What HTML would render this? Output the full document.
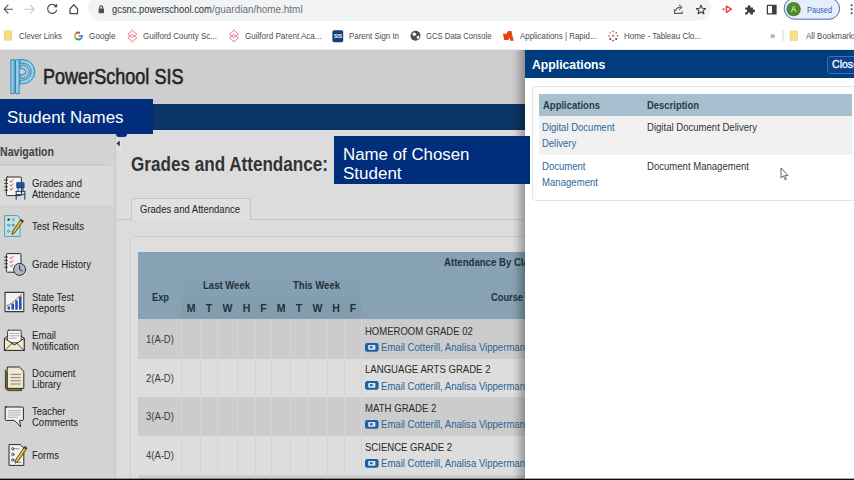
<!DOCTYPE html>
<html><head><meta charset="utf-8"><title>PowerSchool</title>
<style>
*{box-sizing:border-box;margin:0;padding:0}
html,body{width:854px;height:480px;overflow:hidden;background:#fff;font-family:"Liberation Sans",sans-serif}
div,span.t,svg{position:absolute}
.t{white-space:nowrap;transform-origin:0 50%;display:block}
#chrome{left:0;top:0;width:854px;height:50px;background:#fff}
#url{left:88px;top:-6px;width:623px;height:27px;border-radius:14px;background:#f1f3f4}
#page{left:0;top:50px;width:854px;height:429px;background:#dcdcdc;overflow:hidden}
#hdr{left:0;top:0;width:854px;height:54px;background:#cecece}
#navbar{left:0;top:53.5px;width:854px;height:26.5px;background:#0b3566}
#side{left:0;top:80px;width:116px;height:350px;background:#d3d3d3;border-right:1px solid #c8c8c8}
#tbl{left:138px;top:202px;width:500px;height:230px;background:#dfdfdf}
.th{background:#86a2b4}
.vl{top:269px;width:1px;height:160px;background:#bdbdbd}
.row{left:138px;width:500px;height:38.7px}
.c{display:flex;align-items:center;justify-content:center}
#panel{left:525px;top:50px;width:330px;height:429px;background:#fff;}
#phead{left:0;top:0;width:330px;height:27.5px;background:#003d7d}
#black{left:0;top:478px;width:854px;height:2px;background:linear-gradient(rgba(10,10,10,.35) 50%,#0a0a0a 50%)}

</style></head><body>
<div id="chrome"><div id="url"></div>
<svg style="left:0;top:0" width="120" height="22" viewBox="0 0 120 22" fill="none" stroke-linecap="round" stroke-linejoin="round">
<path d="M12.6 9.2H4.4M8 5.2L4.2 9.2L8 13.2" stroke="#505357" stroke-width="1.15"/>
<path d="M24.8 9.2H34M30.4 5.2L34.2 9.2L30.4 13.2" stroke="#c6c8cb" stroke-width="1.15"/>
<path d="M56 6.2A4.6 4.6 0 1 0 56.6 10.4" stroke="#505357" stroke-width="1.25"/>
<path d="M57.2 3.6V7.2H53.6Z" fill="#45474a" stroke="none"/>
<path d="M70 9L73.8 4.6L77.6 9V13.6H70Z" stroke="#45484c" stroke-width="1.2"/>
<rect x="98.6" y="8.6" width="5.4" height="4.6" rx="0.7" fill="#4a4d51"/>
<path d="M99.8 8.6V7.4A1.5 1.5 0 0 1 102.8 7.4V8.6" stroke="#4a4d51" stroke-width="1.1"/>
</svg>
<span class="t" style="left:112px;top:4.00px;font-size:10.2px;line-height:12px;color:#303235;font-weight:normal;transform:scaleX(0.9180)">gcsnc.powerschool.com</span>
<span class="t" style="left:211.9px;top:4.00px;font-size:10.2px;line-height:12px;color:#6b6f74;font-weight:normal;transform:scaleX(0.9755)">/guardian/home.html</span>
<svg style="left:660px;top:0" width="194" height="22" viewBox="0 0 194 22" fill="none" stroke-linecap="round" stroke-linejoin="round">
<path d="M14.4 9.6V13.4H22.2V11.6" stroke="#5f6368" stroke-width="1.1"/>
<path d="M15.6 10.8C16 8.4 17.8 7.4 20 7.4M19.4 5.2L21.8 7.4L19.4 9.6" stroke="#5f6368" stroke-width="1.1"/>
<path d="M41 5.2L42.4 8.2L45.6 8.5L43.2 10.6L43.9 13.8L41 12.1L38.1 13.8L38.8 10.6L36.4 8.5L39.6 8.2Z" stroke="#3f4246" stroke-width="1.15"/>
<path d="M66.4 6.2L71.4 9.2L66.4 12.4Z" stroke="#e8453c" stroke-width="1.5"/>
<circle cx="63.6" cy="9.3" r="1.4" fill="#f0837c"/>
<path d="M85.2 7.4H87.6V6.6A1.45 1.45 0 1 1 90.5 6.6V7.4H92.9V9.6H93.6A1.45 1.45 0 1 1 93.6 12.5H92.9V14.4H90.3V13.7A1.3 1.3 0 1 0 87.7 13.7V14.4H85.2V12.2H85.9A1.3 1.3 0 1 0 85.9 9.6H85.2Z" fill="#3c3f43"/>
<rect x="107.4" y="5.4" width="8.6" height="8.4" fill="#fff" stroke="#3c3f43" stroke-width="1.3"/>
<rect x="112" y="5.4" width="4" height="8.4" fill="#3c3f43"/>
<rect x="124.2" y="-2" width="55.4" height="21.2" rx="10.6" fill="#e7eefb" stroke="#2f5fb0" stroke-width="0.9"/>
<circle cx="133.6" cy="9.1" r="7.2" fill="#4e8a2b"/>
<circle cx="191.6" cy="5.2" r="1" fill="#3c3f43"/><circle cx="191.6" cy="9.2" r="1" fill="#3c3f43"/><circle cx="191.6" cy="13.2" r="1" fill="#3c3f43"/>
</svg>
<span class="t" style="left:791.2px;top:4.00px;font-size:8.5px;line-height:10px;color:#fff;font-weight:normal;transform:scaleX(0.8815)">A</span>
<span class="t" style="left:806.6px;top:3.50px;font-size:9.5px;line-height:11px;color:#2a5db5;font-weight:normal;transform:scaleX(0.7756)">Paused</span>
<svg style="left:0;top:24px" width="854" height="24" viewBox="0 24 854 24" fill="none">
<rect x="4" y="30.6" width="8" height="10.2" rx="0.8" fill="#f5da78"/><rect x="7.4" y="33" width="1.4" height="7.8" fill="#f8e49a"/>
<circle cx="78.4" cy="36" r="3.5" stroke="#4285f4" stroke-width="1.7"/>
<path d="M75.9 33.5A3.5 3.5 0 0 1 81 33.6" stroke="#ea4335" stroke-width="1.7"/>
<path d="M75.9 38.5A3.5 3.5 0 0 1 75.9 33.5" stroke="#fbbc05" stroke-width="1.7"/>
<path d="M81 38.4A3.5 3.5 0 0 1 75.9 38.5" stroke="#34a853" stroke-width="1.7"/>
<rect x="78.6" y="35.2" width="4.2" height="1.6" fill="#4285f4"/><rect x="80" y="31.5" width="3.5" height="3.5" fill="#fff"/>
<g stroke="#e4607a" stroke-width="0.85" stroke-linejoin="round">
<path d="M132.3 30L136.8 34L132.3 37.6L127.9 34.2Z"/><path d="M132.3 34.3L136.8 37.8L132.3 41.8L127.9 37.6Z"/>
<path d="M233.9 30L238.4 34L233.9 37.6L229.5 34.2Z"/><path d="M233.9 34.3L238.4 37.8L233.9 41.8L229.5 37.6Z"/></g>
<rect x="332.4" y="30.2" width="10.8" height="12" rx="1.6" fill="#123f7c"/>
<circle cx="415.5" cy="35.8" r="5" fill="#4a4c4f"/>
<path d="M412 33.2L415 32.4L416.4 34.2L414.6 36.2L413.2 35.4ZM416.6 36.6L419 35.6L419.4 37.8L417.4 39.6Z" fill="#fff"/>
<path d="M503 33.4L506.4 34L508.2 31H511.3L513.7 40.7H510.3L509.5 37.4L508.4 40H504.2Z" fill="#e8400f"/>
<g><circle cx="613.2" cy="31.3" r="0.85" fill="#6f7f8c"/><circle cx="616.3" cy="32.8" r="0.95" fill="#8a9096"/><circle cx="617.5" cy="35.8" r="0.9" fill="#7b8288"/><circle cx="616.1" cy="38.9" r="1" fill="#3b3f6b"/><circle cx="613.2" cy="40.5" r="0.85" fill="#454b55"/><circle cx="610.3" cy="38.9" r="1" fill="#6b3044"/><circle cx="609" cy="35.8" r="0.9" fill="#8d9296"/><circle cx="610.3" cy="32.8" r="0.95" fill="#d9a27c"/><circle cx="613.2" cy="35.8" r="1.5" fill="#e9a55e"/></g>
<rect x="782.4" y="30" width="1" height="11.4" fill="#d5d7da"/>
<rect x="789.6" y="30.6" width="8.4" height="10.4" rx="0.8" fill="#f6de84"/><rect x="793" y="33" width="1.4" height="8" fill="#f9e7a2"/>
</svg>
<span class="t" style="left:333.8px;top:33.30px;font-size:5px;line-height:6px;color:#fff;font-weight:bold;transform:scaleX(0.9922)">SIS</span>
<span class="t" style="left:19px;top:30.10px;font-size:9.4px;line-height:11px;color:#4a4d51;font-weight:normal;transform:scaleX(0.8334)">Clever Links</span>
<span class="t" style="left:89px;top:30.10px;font-size:9.4px;line-height:11px;color:#4a4d51;font-weight:normal;transform:scaleX(0.8765)">Google</span>
<span class="t" style="left:143px;top:30.10px;font-size:9.4px;line-height:11px;color:#4a4d51;font-weight:normal;transform:scaleX(0.8555)">Guilford County Sc...</span>
<span class="t" style="left:244.5px;top:30.10px;font-size:9.4px;line-height:11px;color:#4a4d51;font-weight:normal;transform:scaleX(0.8585)">Guilford Parent Aca...</span>
<span class="t" style="left:348.5px;top:30.10px;font-size:9.4px;line-height:11px;color:#4a4d51;font-weight:normal;transform:scaleX(0.8414)">Parent Sign In</span>
<span class="t" style="left:426px;top:30.10px;font-size:9.4px;line-height:11px;color:#4a4d51;font-weight:normal;transform:scaleX(0.8215)">GCS Data Console</span>
<span class="t" style="left:519.5px;top:30.10px;font-size:9.4px;line-height:11px;color:#4a4d51;font-weight:normal;transform:scaleX(0.8452)">Applications | Rapid...</span>
<span class="t" style="left:624px;top:30.10px;font-size:9.4px;line-height:11px;color:#4a4d51;font-weight:normal;transform:scaleX(0.8508)">Home - Tableau Clo...</span>
<span class="t" style="left:770.2px;top:30.10px;font-size:9.4px;line-height:11px;color:#4a4d51;font-weight:normal;transform:scaleX(0.9581)">»</span>
<span class="t" style="left:805.5px;top:30.10px;font-size:9.4px;line-height:11px;color:#4a4d51;font-weight:normal;transform:scaleX(0.8511)">All Bookmarks</span>
</div>
<div style="left:0;top:49px;width:854px;height:1px;background:#eeeeee"></div>
<div id="page"><div id="hdr"></div><div id="navbar"></div><div id="side"></div>
</div>
<svg style="left:8px;top:56px" width="32" height="42" viewBox="8 56 32 42" fill="none" stroke-linejoin="round">
<rect x="10.9" y="59.8" width="3.3" height="33.8" fill="#8fd0ee" stroke="#2a7aaa" stroke-width="0.9"/>
<rect x="15.5" y="59.8" width="3.7" height="33.8" fill="#8fd0ee" stroke="#2a7aaa" stroke-width="0.9"/>
<path d="M20.2 59.6H22.7A12.1 12.1 0 0 1 22.7 83.8H20.2V80.1H22.7A8.4 8.4 0 0 0 22.7 63.3H20.2Z" fill="#8fd0ee" stroke="#2a7aaa" stroke-width="0.9"/>
<path d="M20.2 65.1H22.7A6.6 6.6 0 0 1 22.7 78.3H20.2V74.6H22.7A2.9 2.9 0 0 0 22.7 68.8H20.2Z" fill="#8fd0ee" stroke="#2a7aaa" stroke-width="0.9"/>
</svg>
<span class="t" style="left:42.5px;top:63.90px;font-size:22px;line-height:26px;color:#242424;font-weight:normal;-webkit-text-stroke:0.6px #242424;transform:scaleX(0.8207)">PowerSchool SIS</span>
<div style="left:0;top:99px;width:152.5px;height:35px;background:#002d7c"></div>
<span class="t" style="left:7.2px;top:106.50px;font-size:17.4px;line-height:21px;color:#fff;font-weight:normal;transform:scaleX(0.9718)">Student Names</span>
<div style="left:115.5px;top:128px;width:11px;height:8.5px;background:#002d7c;border-radius:0 0 3px 3px"></div>
<div style="left:115.5px;top:138px;width:6.5px;height:11.5px;background:#e2e2e2;border-radius:0 2px 2px 0"></div>
<svg style="left:115.5px;top:139px" width="5" height="9" viewBox="0 0 5 9"><path d="M3.6 1.6V7.4L0.6 4.5Z" fill="#222"/></svg>
<span class="t" style="left:0.4px;top:144.50px;font-size:12.2px;line-height:15px;color:#404040;font-weight:bold;transform:scaleX(0.8666)">Navigation</span>
<div style="left:0;top:166px;width:112.5px;height:39px;background:#dbdbdb"></div><div style="left:0;top:164px;width:109px;height:1px;background:#c8c8c8"></div>
<span class="t" style="left:32px;top:176.50px;font-size:10.5px;line-height:13px;color:#222;font-weight:normal;transform:scaleX(0.9112)">Grades and</span>
<span class="t" style="left:32px;top:187.50px;font-size:10.5px;line-height:13px;color:#222;font-weight:normal;transform:scaleX(0.9033)">Attendance</span>
<span class="t" style="left:32px;top:219.50px;font-size:10.5px;line-height:13px;color:#222;font-weight:normal;transform:scaleX(0.9093)">Test Results</span>
<span class="t" style="left:32px;top:258.00px;font-size:10.5px;line-height:13px;color:#222;font-weight:normal;transform:scaleX(0.9108)">Grade History</span>
<span class="t" style="left:32px;top:291.00px;font-size:10.5px;line-height:13px;color:#222;font-weight:normal;transform:scaleX(0.9029)">State Test</span>
<span class="t" style="left:32px;top:301.50px;font-size:10.5px;line-height:13px;color:#222;font-weight:normal;transform:scaleX(0.8976)">Reports</span>
<span class="t" style="left:32px;top:329.00px;font-size:10.5px;line-height:13px;color:#222;font-weight:normal;transform:scaleX(0.9137)">Email</span>
<span class="t" style="left:32px;top:340.00px;font-size:10.5px;line-height:13px;color:#222;font-weight:normal;transform:scaleX(0.9047)">Notification</span>
<span class="t" style="left:32px;top:367.25px;font-size:10.5px;line-height:13px;color:#222;font-weight:normal;transform:scaleX(0.9089)">Document</span>
<span class="t" style="left:32px;top:378.00px;font-size:10.5px;line-height:13px;color:#222;font-weight:normal;transform:scaleX(0.9032)">Library</span>
<span class="t" style="left:32px;top:405.40px;font-size:10.5px;line-height:13px;color:#222;font-weight:normal;transform:scaleX(0.8967)">Teacher</span>
<span class="t" style="left:32px;top:416.20px;font-size:10.5px;line-height:13px;color:#222;font-weight:normal;transform:scaleX(0.9061)">Comments</span>
<span class="t" style="left:32px;top:448.50px;font-size:10.5px;line-height:13px;color:#222;font-weight:normal;transform:scaleX(0.9076)">Forms</span>
<svg style="left:0;top:170px" width="32" height="300" viewBox="0 170 32 300" fill="none" stroke-linejoin="round" stroke-linecap="round">
<!-- 1 grades & attendance -->
<rect x="6.4" y="177" width="15" height="18.6" rx="1" fill="#f4f4f4" stroke="#2b2b2b" stroke-width="1"/>
<path d="M4.6 180H7.6M4.6 183.4H7.6M4.6 186.8H7.6M4.6 190.2H7.6" stroke="#2b2b2b" stroke-width="0.9"/>
<path d="M10 181l1 1.2l2-2.4M10 185l1 1.2l2-2.4M10 189l1 1.2l2-2.4" stroke="#d23b2e" stroke-width="0.9"/>
<rect x="16.6" y="182.4" width="7.6" height="5.6" rx="0.6" fill="#1f4f9c" stroke="#16396f" stroke-width="0.6"/>
<path d="M16 191.4H25M16.2 191.4V199.4M24.8 191.4V199.4M16.2 194.6H24.8M18 188V191.4M23 188V191.4" stroke="#1d3f78" stroke-width="1"/>
<!-- 2 test results -->
<path d="M5 215.6H17.4L20 218V236.4H5Z" fill="#bfe3e6" stroke="#4a8d96" stroke-width="0.8"/>
<circle cx="8.6" cy="219.6" r="1.2" fill="#2a2a2a"/><circle cx="8.6" cy="225.2" r="1.1" stroke="#3a7a84" stroke-width="0.7"/><circle cx="13" cy="225.2" r="1.1" stroke="#3a7a84" stroke-width="0.7"/><circle cx="8.6" cy="231.2" r="1.1" stroke="#3a7a84" stroke-width="0.7"/>
<path d="M12.4 218.4l1 2.4M14.6 218.4l-1.2 2.4" stroke="#3a7a84" stroke-width="0.6"/>
<path d="M21.4 219.4L23.4 221L14.6 233L12 234.4L12.6 231.4Z" fill="#e9b93a" stroke="#3a2c12" stroke-width="0.8"/>
<path d="M21.4 219.4L23.4 221L22.4 222.4L20.4 220.8Z" fill="#3a2c12"/>
<!-- 3 grade history -->
<rect x="6.4" y="253.6" width="14.6" height="18.6" rx="1" fill="#f4f4f4" stroke="#2b2b2b" stroke-width="1"/>
<path d="M4.6 257H7.6M4.6 260.4H7.6M4.6 263.8H7.6M4.6 267.2H7.6" stroke="#2b2b2b" stroke-width="0.9"/>
<path d="M10 257.6l1 1.2l2-2.4M10 261.6l1 1.2l2-2.4M10 265.6l1 1.2l2-2.4" stroke="#d23b2e" stroke-width="0.9"/>
<circle cx="19.6" cy="269.4" r="6" fill="#aeb8c4" stroke="#2b2b2b" stroke-width="1"/>
<path d="M19.6 265.4V269.6L22.2 271" stroke="#1d1d1d" stroke-width="0.9"/>
<!-- 4 state test reports -->
<rect x="5" y="292.4" width="18.8" height="19.2" fill="#f2f2f2" stroke="#3a3a3a" stroke-width="1.1"/>
<rect x="7.6" y="306.4" width="2.4" height="3.2" fill="#1f56b0"/><rect x="11.4" y="303.6" width="2.6" height="6" fill="#1f56b0"/><rect x="15.2" y="300.4" width="2.6" height="9.2" fill="#1f56b0"/><rect x="19" y="296.4" width="2.6" height="13.2" fill="#1f56b0"/>
<path d="M6.8 305.6C11 304.6 14 301 21.6 294.4" stroke="#d8412f" stroke-width="0.9"/>
<!-- 5 email -->
<path d="M4.8 338.2L14.4 331L24.2 338.2V350.4H4.8Z" fill="#efe4c6" stroke="#2b2b2b" stroke-width="1"/>
<rect x="7.6" y="330.2" width="13.6" height="12.6" rx="1" fill="#f7f7f7" stroke="#2b2b2b" stroke-width="0.9"/>
<path d="M9.8 333.4H19M9.8 335.8H19M9.8 338.2H16" stroke="#8a8a8a" stroke-width="0.7"/>
<path d="M4.8 338.4L14.4 345L24.2 338.4V350.4H4.8Z" fill="#f3e9cf" stroke="#2b2b2b" stroke-width="1"/>
<path d="M4.8 350.4L12 343.4M24.2 350.4L17 343.4" stroke="#2b2b2b" stroke-width="0.8"/>
<!-- 6 document library -->
<path d="M5.4 370V388.6L8 390.6H21.6V388.6" fill="#8a7a3c" stroke="#3a3213" stroke-width="0.9"/>
<path d="M7.6 367H19.4L23.8 371.4V388.4H7.6Z" fill="#efe8cf" stroke="#2b2b2b" stroke-width="1"/>
<path d="M11 374.4H20.4M11 377.6H20.4M11 380.8H20.4M11 384H20.4" stroke="#6a6a6a" stroke-width="0.8"/>
<!-- 7 teacher comments -->
<path d="M5.2 407H22.4Q23.4 407 23.4 408V419.4Q23.4 420.4 22.4 420.4H19.6L20.6 426.8L14.4 420.4H6.2Q5.2 420.4 5.2 419.4V408Q5.2 407 6.2 407Z" fill="#f0f0f0" stroke="#2b2b2b" stroke-width="1"/>
<path d="M8.2 410.6H20.4M8.2 412.8H20.4M8.2 415H20.4M8.2 417.2H17" stroke="#9a9a9a" stroke-width="0.7"/>
<!-- 8 forms -->
<path d="M9.4 444.6H20.2L23.8 448V465.4H9.4Z" fill="#f2f2f2" stroke="#2b2b2b" stroke-width="1"/>
<circle cx="12.8" cy="448.8" r="1.2" stroke="#2b2b2b" stroke-width="0.8"/><circle cx="12.8" cy="454.4" r="1.2" stroke="#2b2b2b" stroke-width="0.8"/><circle cx="12.8" cy="460" r="1.2" stroke="#2b2b2b" stroke-width="0.8"/>
<path d="M15.6 448.8H19M15.6 462.4H21" stroke="#555" stroke-width="0.7"/>
<path d="M25 446.6L27 448.2L18 461.4L15 463.2L15.8 459.8Z" fill="#e9b93a" stroke="#3a2c12" stroke-width="0.8"/>
<path d="M25 446.6L27 448.2L26 449.6L24 448Z" fill="#3a2c12"/>
</svg>
<span class="t" style="left:131px;top:153.00px;font-size:19.5px;line-height:23px;color:#333;font-weight:bold;transform:scaleX(0.8768)">Grades and Attendance:</span>
<div style="left:117px;top:219px;width:410px;height:1px;background:#c6c6c6"></div>
<div style="left:130.5px;top:198px;width:120px;height:22px;background:#e0e0e0;border:1px solid #c6c6c6;border-bottom:none;border-radius:3px 3px 0 0"></div>
<span class="t" style="left:140px;top:203.00px;font-size:10.5px;line-height:13px;color:#222;font-weight:normal;transform:scaleX(0.9063)">Grades and Attendance</span>
<div style="left:130px;top:236px;width:420px;height:260px;background:#dedede;border:1px solid #cdcdcd;border-radius:4px"></div>
<div class="th" style="left:138px;top:252px;width:400px;height:67px"></div>
<div style="left:181px;top:274px;width:180px;height:45px;background:#84a0b2"></div>
<div style="left:181px;top:297px;width:180px;height:22px;background:#819dae"></div>
<div style="left:138px;top:319px;width:400px;height:39.5px;background:#cccccc"></div>
<div style="left:138px;top:358.5px;width:400px;height:38.5px;background:#dddddd"></div>
<div style="left:138px;top:397px;width:400px;height:39px;background:#cccccc"></div>
<div style="left:138px;top:436px;width:400px;height:38.5px;background:#dddddd"></div>
<div style="left:138px;top:474.5px;width:400px;height:10px;background:#cccccc"></div>
<div style="left:180.5px;top:319px;width:1px;height:160px;background:#d4d4d4"></div>
<div style="left:199.5px;top:319px;width:1px;height:160px;background:#d4d4d4"></div>
<div style="left:216.5px;top:319px;width:1px;height:160px;background:#d4d4d4"></div>
<div style="left:236.5px;top:319px;width:1px;height:160px;background:#d4d4d4"></div>
<div style="left:254.5px;top:319px;width:1px;height:160px;background:#d4d4d4"></div>
<div style="left:270.5px;top:319px;width:1px;height:160px;background:#d4d4d4"></div>
<div style="left:289.5px;top:319px;width:1px;height:160px;background:#d4d4d4"></div>
<div style="left:306.5px;top:319px;width:1px;height:160px;background:#d4d4d4"></div>
<div style="left:326.5px;top:319px;width:1px;height:160px;background:#d4d4d4"></div>
<div style="left:343.5px;top:319px;width:1px;height:160px;background:#d4d4d4"></div>
<div style="left:360.5px;top:319px;width:1px;height:160px;background:#d4d4d4"></div>
<span class="t" style="left:151.5px;top:290.50px;font-size:10.5px;line-height:13px;color:#24313b;font-weight:bold;transform:scaleX(0.8824)">Exp</span>
<span class="t" style="left:203px;top:278.50px;font-size:10.5px;line-height:13px;color:#24313b;font-weight:bold;transform:scaleX(0.9082)">Last Week</span>
<span class="t" style="left:293px;top:278.50px;font-size:10.5px;line-height:13px;color:#24313b;font-weight:bold;transform:scaleX(0.9082)">This Week</span>
<div class="c" style="left:181px;top:301px;width:19px;height:14px;font-size:10.5px;font-weight:bold;color:#24313b;padding-left:1px">M</div>
<div class="c" style="left:200px;top:301px;width:17px;height:14px;font-size:10.5px;font-weight:bold;color:#24313b;padding-left:1px">T</div>
<div class="c" style="left:217px;top:301px;width:20px;height:14px;font-size:10.5px;font-weight:bold;color:#24313b;padding-left:1px">W</div>
<div class="c" style="left:237px;top:301px;width:18px;height:14px;font-size:10.5px;font-weight:bold;color:#24313b;padding-left:1px">H</div>
<div class="c" style="left:255px;top:301px;width:16px;height:14px;font-size:10.5px;font-weight:bold;color:#24313b;padding-left:1px">F</div>
<div class="c" style="left:271px;top:301px;width:19px;height:14px;font-size:10.5px;font-weight:bold;color:#24313b;padding-left:1px">M</div>
<div class="c" style="left:290px;top:301px;width:17px;height:14px;font-size:10.5px;font-weight:bold;color:#24313b;padding-left:1px">T</div>
<div class="c" style="left:307px;top:301px;width:20px;height:14px;font-size:10.5px;font-weight:bold;color:#24313b;padding-left:1px">W</div>
<div class="c" style="left:327px;top:301px;width:17px;height:14px;font-size:10.5px;font-weight:bold;color:#24313b;padding-left:1px">H</div>
<div class="c" style="left:344px;top:301px;width:17px;height:14px;font-size:10.5px;font-weight:bold;color:#24313b;padding-left:1px">F</div>
<span class="t" style="left:443.75px;top:256.00px;font-size:10.5px;line-height:13px;color:#24313b;font-weight:bold;transform:scaleX(0.9145)">Attendance By Class</span>
<span class="t" style="left:491px;top:290.50px;font-size:10.5px;line-height:13px;color:#24313b;font-weight:bold;transform:scaleX(0.8843)">Course</span>
<span class="t" style="left:146.2px;top:332.50px;font-size:10.5px;line-height:13px;color:#3a3a3a;font-weight:normal;transform:scaleX(0.8990)">1(A-D)</span>
<span class="t" style="left:365px;top:324.50px;font-size:10.5px;line-height:13px;color:#2a2a2a;font-weight:normal;transform:scaleX(0.9056)">HOMEROOM GRADE 02</span>
<svg style="left:364.6px;top:342.9px" width="14" height="9" viewBox="0 0 14 9"><rect x="0" y="0" width="13.6" height="8.8" rx="2.2" fill="#1f5fa3"/><rect x="3.2" y="2" width="7.2" height="4.8" rx="0.8" fill="#d6e4f3"/><rect x="5" y="3.2" width="2.6" height="2" fill="#1f5fa3"/></svg>
<span class="t" style="left:381.2px;top:341.00px;font-size:10.5px;line-height:13px;color:#2a6496;font-weight:normal;transform:scaleX(0.9116)">Email Cotterill, Analisa Vipperman</span>
<span class="t" style="left:146.2px;top:371.50px;font-size:10.5px;line-height:13px;color:#3a3a3a;font-weight:normal;transform:scaleX(0.8990)">2(A-D)</span>
<span class="t" style="left:365px;top:363.00px;font-size:10.5px;line-height:13px;color:#2a2a2a;font-weight:normal;transform:scaleX(0.9126)">LANGUAGE ARTS GRADE 2</span>
<svg style="left:364.6px;top:381.4px" width="14" height="9" viewBox="0 0 14 9"><rect x="0" y="0" width="13.6" height="8.8" rx="2.2" fill="#1f5fa3"/><rect x="3.2" y="2" width="7.2" height="4.8" rx="0.8" fill="#d6e4f3"/><rect x="5" y="3.2" width="2.6" height="2" fill="#1f5fa3"/></svg>
<span class="t" style="left:381.2px;top:379.50px;font-size:10.5px;line-height:13px;color:#2a6496;font-weight:normal;transform:scaleX(0.9116)">Email Cotterill, Analisa Vipperman</span>
<span class="t" style="left:146.2px;top:409.50px;font-size:10.5px;line-height:13px;color:#3a3a3a;font-weight:normal;transform:scaleX(0.8990)">3(A-D)</span>
<span class="t" style="left:365px;top:401.50px;font-size:10.5px;line-height:13px;color:#2a2a2a;font-weight:normal;transform:scaleX(0.9156)">MATH GRADE 2</span>
<svg style="left:364.6px;top:419.9px" width="14" height="9" viewBox="0 0 14 9"><rect x="0" y="0" width="13.6" height="8.8" rx="2.2" fill="#1f5fa3"/><rect x="3.2" y="2" width="7.2" height="4.8" rx="0.8" fill="#d6e4f3"/><rect x="5" y="3.2" width="2.6" height="2" fill="#1f5fa3"/></svg>
<span class="t" style="left:381.2px;top:418.00px;font-size:10.5px;line-height:13px;color:#2a6496;font-weight:normal;transform:scaleX(0.9116)">Email Cotterill, Analisa Vipperman</span>
<span class="t" style="left:146.2px;top:448.50px;font-size:10.5px;line-height:13px;color:#3a3a3a;font-weight:normal;transform:scaleX(0.8990)">4(A-D)</span>
<span class="t" style="left:365px;top:440.50px;font-size:10.5px;line-height:13px;color:#2a2a2a;font-weight:normal;transform:scaleX(0.9091)">SCIENCE GRADE 2</span>
<svg style="left:364.6px;top:458.9px" width="14" height="9" viewBox="0 0 14 9"><rect x="0" y="0" width="13.6" height="8.8" rx="2.2" fill="#1f5fa3"/><rect x="3.2" y="2" width="7.2" height="4.8" rx="0.8" fill="#d6e4f3"/><rect x="5" y="3.2" width="2.6" height="2" fill="#1f5fa3"/></svg>
<span class="t" style="left:381.2px;top:457.00px;font-size:10.5px;line-height:13px;color:#2a6496;font-weight:normal;transform:scaleX(0.9116)">Email Cotterill, Analisa Vipperman</span>
<div style="left:512px;top:50px;width:13px;height:429px;background:linear-gradient(to right,rgba(0,0,0,0),rgba(0,0,0,.07) 35%,rgba(0,0,0,.3))"></div>
<div id="panel"><div id="phead"></div>
<div style="left:301.5px;top:5.5px;width:40px;height:18px;border:1px solid #3473bb;border-radius:3.5px;background:#08428a"></div>
<div style="left:7px;top:36px;width:340px;height:114.5px;border:1px solid #e4e4e4;border-radius:4px;background:#fff"></div>
<div style="left:14px;top:44px;width:312.5px;height:22px;background:#a6c0d0"></div>
<div style="left:14px;top:66px;width:312.5px;height:38.5px;background:#f1f1f1"></div>
</div>
<span class="t" style="left:532px;top:57.20px;font-size:12.9px;line-height:15px;color:#fff;font-weight:bold;transform:scaleX(0.9488)">Applications</span>
<span class="t" style="left:831.5px;top:57.80px;font-size:11px;line-height:13px;color:#fff;font-weight:normal;-webkit-text-stroke:0.3px #fff;transform:scaleX(0.9600)">Close</span>
<span class="t" style="left:542.7px;top:98.80px;font-size:10.5px;line-height:13px;color:#2c3a45;font-weight:bold;transform:scaleX(0.9045)">Applications</span>
<span class="t" style="left:647px;top:98.80px;font-size:10.5px;line-height:13px;color:#2c3a45;font-weight:bold;transform:scaleX(0.9002)">Description</span>
<span class="t" style="left:542.4px;top:121.30px;font-size:10.5px;line-height:13px;color:#2b689d;font-weight:normal;transform:scaleX(0.9080)">Digital Document</span>
<span class="t" style="left:542.4px;top:137.00px;font-size:10.5px;line-height:13px;color:#2b689d;font-weight:normal;transform:scaleX(0.9015)">Delivery</span>
<span class="t" style="left:542.4px;top:159.50px;font-size:10.5px;line-height:13px;color:#2b689d;font-weight:normal;transform:scaleX(0.9089)">Document</span>
<span class="t" style="left:542.4px;top:175.50px;font-size:10.5px;line-height:13px;color:#2b689d;font-weight:normal;transform:scaleX(0.9136)">Management</span>
<span class="t" style="left:647px;top:121.30px;font-size:10.5px;line-height:13px;color:#333;font-weight:normal;transform:scaleX(0.9106)">Digital Document Delivery</span>
<span class="t" style="left:647px;top:159.50px;font-size:10.5px;line-height:13px;color:#333;font-weight:normal;transform:scaleX(0.9102)">Document Management</span>
<div style="left:334px;top:136px;width:195.7px;height:48px;background:#002d7c"></div>
<span class="t" style="left:343px;top:143.50px;font-size:17.4px;line-height:21px;color:#fff;font-weight:normal;transform:scaleX(0.9693)">Name of Chosen</span>
<span class="t" style="left:343px;top:163.00px;font-size:17.4px;line-height:21px;color:#fff;font-weight:normal;transform:scaleX(0.9774)">Student</span>
<svg style="left:780px;top:167px" width="9" height="14" viewBox="0 0 9 14"><path d="M1 1V11L3.4 8.8L5.2 12.8L6.6 12.2L4.8 8.4H8Z" fill="#fff" stroke="#444" stroke-width="0.8" stroke-linejoin="round"/></svg>
<div id="black"></div>
</body></html>
